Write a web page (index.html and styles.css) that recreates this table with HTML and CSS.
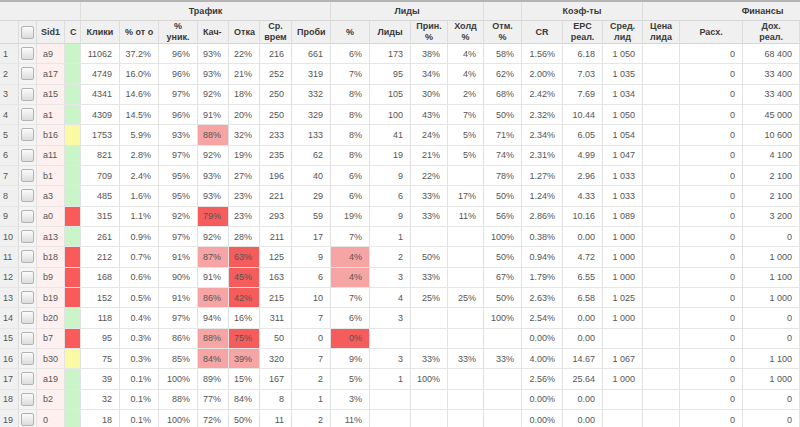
FILE: index.html
```html
<!DOCTYPE html>
<html lang="ru">
<head>
<meta charset="utf-8">
<title>Статистика</title>
<link rel="stylesheet" href="styles.css">
</head>
<body>
<div class="grid">
<table class="ht">
<colgroup>
<col class="w19"><col class="w18"><col class="w28"><col class="w16">
<col class="w39"><col class="w39"><col class="w39"><col class="w31"><col class="w31"><col class="w32"><col class="w39">
<col class="w39"><col class="w41"><col class="w37"><col class="w36"><col class="w38">
<col class="w41"><col class="w40"><col class="w40"><col class="w37"><col class="w63"><col class="w57"><col class="w83">
</colgroup>
<thead>
<tr class="grp">
<th colspan="4" class="corner"></th>
<th colspan="7">Трафик</th>
<th colspan="4">Лиды</th>
<th></th>
<th colspan="3">Коэф-ты</th>
<th colspan="4">Финансы</th>
</tr>
<tr class="cols">
<th class="corner"></th>
<th class="corner"><span class="box"></span></th>
<th><div class="clip">Sid1</div></th>
<th><div class="clip left">С</div></th>
<th><div class="clip">Клики</div></th>
<th><div class="clip left">% от о</div></th>
<th><div class="clip">%<br>уник.</div></th>
<th><div class="clip left">Кач-</div></th>
<th><div class="clip left">Отка</div></th>
<th><div class="clip">Ср.<br>врем</div></th>
<th><div class="clip left">Проби</div></th>
<th><div class="clip">%</div></th>
<th><div class="clip">Лиды</div></th>
<th><div class="clip">Прин.<br>%</div></th>
<th><div class="clip">Холд<br>%</div></th>
<th><div class="clip">Отм.<br>%</div></th>
<th><div class="clip">CR</div></th>
<th><div class="clip">EPC<br>реал.</div></th>
<th><div class="clip">Сред.<br>лид</div></th>
<th><div class="clip">Цена<br>лида</div></th>
<th><div class="clip">Расх.</div></th>
<th><div class="clip">Дох.<br>реал.</div></th>
<th></th>
</tr>
</thead>
<tbody>
<tr><td class="rh">1</td><td class="cb"><span class="box"></span></td><td class="sid">a9</td><td class="cg"></td><td>11062</td><td>37.2%</td><td>96%</td><td>93%</td><td>22%</td><td>216</td><td>661</td><td>6%</td><td>173</td><td>38%</td><td>4%</td><td>58%</td><td>1.56%</td><td>6.18</td><td>1 050</td><td></td><td>0</td><td>68 400</td><td></td></tr>
<tr><td class="rh">2</td><td class="cb"><span class="box"></span></td><td class="sid">a17</td><td class="cg"></td><td>4749</td><td>16.0%</td><td>96%</td><td>93%</td><td>21%</td><td>252</td><td>319</td><td>7%</td><td>95</td><td>34%</td><td>4%</td><td>62%</td><td>2.00%</td><td>7.03</td><td>1 035</td><td></td><td>0</td><td>33 400</td><td></td></tr>
<tr><td class="rh">3</td><td class="cb"><span class="box"></span></td><td class="sid">a15</td><td class="cg"></td><td>4341</td><td>14.6%</td><td>97%</td><td>92%</td><td>18%</td><td>250</td><td>332</td><td>8%</td><td>105</td><td>30%</td><td>2%</td><td>68%</td><td>2.42%</td><td>7.69</td><td>1 034</td><td></td><td>0</td><td>33 400</td><td></td></tr>
<tr><td class="rh">4</td><td class="cb"><span class="box"></span></td><td class="sid">a1</td><td class="cg"></td><td>4309</td><td>14.5%</td><td>96%</td><td>91%</td><td>20%</td><td>250</td><td>329</td><td>8%</td><td>100</td><td>43%</td><td>7%</td><td>50%</td><td>2.32%</td><td>10.44</td><td>1 050</td><td></td><td>0</td><td>45 000</td><td></td></tr>
<tr><td class="rh">5</td><td class="cb"><span class="box"></span></td><td class="sid">b16</td><td class="cy"></td><td>1753</td><td>5.9%</td><td>93%</td><td class="lo">88%</td><td>32%</td><td>233</td><td>133</td><td>8%</td><td>41</td><td>24%</td><td>5%</td><td>71%</td><td>2.34%</td><td>6.05</td><td>1 054</td><td></td><td>0</td><td>10 600</td><td></td></tr>
<tr><td class="rh">6</td><td class="cb"><span class="box"></span></td><td class="sid">a11</td><td class="cg"></td><td>821</td><td>2.8%</td><td>97%</td><td>92%</td><td>19%</td><td>235</td><td>62</td><td>8%</td><td>19</td><td>21%</td><td>5%</td><td>74%</td><td>2.31%</td><td>4.99</td><td>1 047</td><td></td><td>0</td><td>4 100</td><td></td></tr>
<tr><td class="rh">7</td><td class="cb"><span class="box"></span></td><td class="sid">b1</td><td class="cg"></td><td>709</td><td>2.4%</td><td>95%</td><td>93%</td><td>27%</td><td>196</td><td>40</td><td>6%</td><td>9</td><td>22%</td><td></td><td>78%</td><td>1.27%</td><td>2.96</td><td>1 033</td><td></td><td>0</td><td>2 100</td><td></td></tr>
<tr><td class="rh">8</td><td class="cb"><span class="box"></span></td><td class="sid">a3</td><td class="cg"></td><td>485</td><td>1.6%</td><td>95%</td><td>93%</td><td>23%</td><td>221</td><td>29</td><td>6%</td><td>6</td><td>33%</td><td>17%</td><td>50%</td><td>1.24%</td><td>4.33</td><td>1 033</td><td></td><td>0</td><td>2 100</td><td></td></tr>
<tr><td class="rh">9</td><td class="cb"><span class="box"></span></td><td class="sid">a0</td><td class="cr"></td><td>315</td><td>1.1%</td><td>92%</td><td class="hi">79%</td><td>23%</td><td>293</td><td>59</td><td>19%</td><td>9</td><td>33%</td><td>11%</td><td>56%</td><td>2.86%</td><td>10.16</td><td>1 089</td><td></td><td>0</td><td>3 200</td><td></td></tr>
<tr><td class="rh">10</td><td class="cb"><span class="box"></span></td><td class="sid">a13</td><td class="cg"></td><td>261</td><td>0.9%</td><td>97%</td><td>92%</td><td>28%</td><td>211</td><td>17</td><td>7%</td><td>1</td><td></td><td></td><td>100%</td><td>0.38%</td><td>0.00</td><td>1 000</td><td></td><td>0</td><td>0</td><td></td></tr>
<tr><td class="rh">11</td><td class="cb"><span class="box"></span></td><td class="sid">b18</td><td class="cr"></td><td>212</td><td>0.7%</td><td>91%</td><td class="lo">87%</td><td class="hi">63%</td><td>125</td><td>9</td><td class="lo">4%</td><td>2</td><td>50%</td><td></td><td>50%</td><td>0.94%</td><td>4.72</td><td>1 000</td><td></td><td>0</td><td>1 000</td><td></td></tr>
<tr><td class="rh">12</td><td class="cb"><span class="box"></span></td><td class="sid">b9</td><td class="cr"></td><td>168</td><td>0.6%</td><td>90%</td><td>91%</td><td class="hi">45%</td><td>163</td><td>6</td><td class="lo">4%</td><td>3</td><td>33%</td><td></td><td>67%</td><td>1.79%</td><td>6.55</td><td>1 000</td><td></td><td>0</td><td>1 100</td><td></td></tr>
<tr><td class="rh">13</td><td class="cb"><span class="box"></span></td><td class="sid">b19</td><td class="cr"></td><td>152</td><td>0.5%</td><td>91%</td><td class="lo">86%</td><td class="hi">42%</td><td>215</td><td>10</td><td>7%</td><td>4</td><td>25%</td><td>25%</td><td>50%</td><td>2.63%</td><td>6.58</td><td>1 025</td><td></td><td>0</td><td>1 000</td><td></td></tr>
<tr><td class="rh">14</td><td class="cb"><span class="box"></span></td><td class="sid">b20</td><td class="cg"></td><td>118</td><td>0.4%</td><td>97%</td><td>94%</td><td>16%</td><td>311</td><td>7</td><td>6%</td><td>3</td><td></td><td></td><td>100%</td><td>2.54%</td><td>0.00</td><td>1 000</td><td></td><td>0</td><td>0</td><td></td></tr>
<tr><td class="rh">15</td><td class="cb"><span class="box"></span></td><td class="sid">b7</td><td class="cr"></td><td>95</td><td>0.3%</td><td>86%</td><td class="lo">88%</td><td class="hi">75%</td><td>50</td><td>0</td><td class="hi">0%</td><td></td><td></td><td></td><td></td><td>0.00%</td><td>0.00</td><td></td><td></td><td>0</td><td>0</td><td></td></tr>
<tr><td class="rh">16</td><td class="cb"><span class="box"></span></td><td class="sid">b30</td><td class="cy"></td><td>75</td><td>0.3%</td><td>85%</td><td class="lo">84%</td><td class="lo">39%</td><td>320</td><td>7</td><td>9%</td><td>3</td><td>33%</td><td>33%</td><td>33%</td><td>4.00%</td><td>14.67</td><td>1 067</td><td></td><td>0</td><td>1 100</td><td></td></tr>
<tr><td class="rh">17</td><td class="cb"><span class="box"></span></td><td class="sid">a19</td><td class="cg"></td><td>39</td><td>0.1%</td><td>100%</td><td>89%</td><td>15%</td><td>167</td><td>2</td><td>5%</td><td>1</td><td>100%</td><td></td><td></td><td>2.56%</td><td>25.64</td><td>1 000</td><td></td><td>0</td><td>1 000</td><td></td></tr>
<tr><td class="rh">18</td><td class="cb"><span class="box"></span></td><td class="sid">b2</td><td class="cg"></td><td>32</td><td>0.1%</td><td>88%</td><td>77%</td><td>84%</td><td>8</td><td>1</td><td>3%</td><td></td><td></td><td></td><td></td><td>0.00%</td><td>0.00</td><td></td><td></td><td>0</td><td>0</td><td></td></tr>
<tr><td class="rh">19</td><td class="cb"><span class="box"></span></td><td class="sid">0</td><td class="cg"></td><td>18</td><td>0.1%</td><td>100%</td><td>72%</td><td>50%</td><td>11</td><td>2</td><td>11%</td><td></td><td></td><td></td><td></td><td>0.00%</td><td>0.00</td><td></td><td></td><td>0</td><td>0</td><td></td></tr>
</tbody>
</table>
</div>
</body>
</html>
```
FILE: styles.css
```css
html, body {
  margin: 0;
  padding: 0;
  background: #ffffff;
}
.grid {
  width: 800px;
  height: 427px;
  overflow: hidden;
  border-top: 2px solid #b4b4b4;
  box-sizing: border-box;
  font-family: "Liberation Sans", Arial, sans-serif;
  font-size: 9px;
  color: #555555;
}
.ht {
  table-layout: fixed;
  border-collapse: separate;
  border-spacing: 0;
  width: 883px;
}
.w16 { width: 16px; }
.w18 { width: 18px; }
.w19 { width: 19px; }
.w28 { width: 28px; }
.w31 { width: 31px; }
.w32 { width: 32px; }
.w36 { width: 36px; }
.w37 { width: 37px; }
.w38 { width: 38px; }
.w39 { width: 39px; }
.w40 { width: 40px; }
.w41 { width: 41px; }
.w57 { width: 57px; }
.w63 { width: 63px; }
.w83 { width: 83px; }

.ht th, .ht td {
  box-sizing: border-box;
  padding: 0;
  border-right: 1px solid #e2e2e2;
  border-bottom: 1px solid #e6e6e6;
  overflow: hidden;
  white-space: nowrap;
}
.ht th {
  background: #f0f0f0;
  color: #3a3a3a;
  font-weight: bold;
  text-align: center;
  line-height: 11px;
  border-right-color: #dddddd;
  border-bottom-color: #d6d6d6;
}
.grp th {
  height: 19px;
  vertical-align: middle;
}
.cols th {
  height: 23px;
  vertical-align: middle;
}
.clip {
  overflow: hidden;
  padding: 0 4px;
  text-align: center;
}
.clip.left {
  text-align: left;
  padding: 0 0 0 5px;
}
.corner {
  background: #f0f0f0;
}
.ht td {
  height: 20.33px;
  text-align: right;
  padding-right: 7px;
  vertical-align: middle;
}
.ht td.rh {
  text-align: left;
  padding: 0 0 0 3px;
  background: #f0f0f0;
  color: #555555;
  border-right-color: #dddddd;
}
.ht td.cb {
  text-align: center;
  padding: 0;
  background: #f4f4f4;
}
.box {
  display: inline-block;
  width: 11px;
  height: 11px;
  border: 1px solid #b3b3b3;
  border-radius: 2px;
  background: linear-gradient(#fbfbfb, #dcdcdc);
  vertical-align: middle;
}
.ht td.sid {
  text-align: left;
  padding: 0 0 0 6px;
  background: #fdf0ef;
}
.ht td.cg { background: #c9f5c9; }
.ht td.cy { background: #fbf9a2; }
.ht td.cr { background: #fb5a5a; }
.ht td.lo { background: #f7a4a4; }
.ht td.hi { background: #f55c5c; }
```
